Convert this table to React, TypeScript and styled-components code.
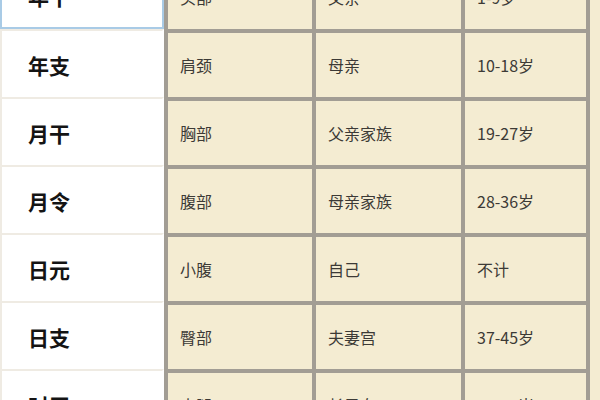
import React from 'react';
import styled, { createGlobalStyle } from 'styled-components';

const GlobalStyle = createGlobalStyle`
  html, body {
    margin: 0;
    padding: 0;
    width: 600px;
    height: 400px;
    overflow: hidden;
    background-color: #f4ecd2;
    font-family: "Noto Sans CJK SC", "Noto Sans", sans-serif;
  }
`;

const Table = styled.div`
  display: grid;
  grid-template-columns: 164px 144px 145px 121px;
  column-gap: 4px;
  width: 586px;
  margin-top: -39px;
  padding-right: 4px;
  background-color: #a29d94;
`;

const HeadCell = styled.div<{ $selected?: boolean }>`
  box-sizing: border-box;
  height: 68px;
  display: flex;
  align-items: center;
  padding: 2px 0 0 26px;
  background-color: #ffffff;
  border-top: 2px solid #efebe3;
  border-left: 2px solid ${p => (p.$selected ? '#a9cbe6' : '#efebe3')};
  border-right: 2px solid ${p => (p.$selected ? '#a9cbe6' : '#ffffff')};
  border-bottom: ${p => (p.$selected ? '2px solid #a9cbe6' : 'none')};
  font-size: 21px;
  font-weight: 700;
  color: #141414;
`;

const Cell = styled.div`
  box-sizing: border-box;
  height: 68px;
  display: flex;
  align-items: center;
  padding-left: 12px;
  background-color: #f4ecd2;
  border-top: 4px solid #a29d94;
  font-size: 16px;
  color: #3c3a36;
`;

const rows = [
  ['年干', '头部', '父亲', '1-9岁'],
  ['年支', '肩颈', '母亲', '10-18岁'],
  ['月干', '胸部', '父亲家族', '19-27岁'],
  ['月令', '腹部', '母亲家族', '28-36岁'],
  ['日元', '小腹', '自己', '不计'],
  ['日支', '臀部', '夫妻宫', '37-45岁'],
  ['时干', '大腿', '长子女', '46-54岁'],
];

const App: React.FC = () => {
  return (
    <>
      <GlobalStyle />
      <Table>
        {rows.map((r, i) => (
          <React.Fragment key={r[0]}>
            <HeadCell $selected={i === 0}>{r[0]}</HeadCell>
            <Cell>{r[1]}</Cell>
            <Cell>{r[2]}</Cell>
            <Cell>{r[3]}</Cell>
          </React.Fragment>
        ))}
      </Table>
    </>
  );
};

export default App;
